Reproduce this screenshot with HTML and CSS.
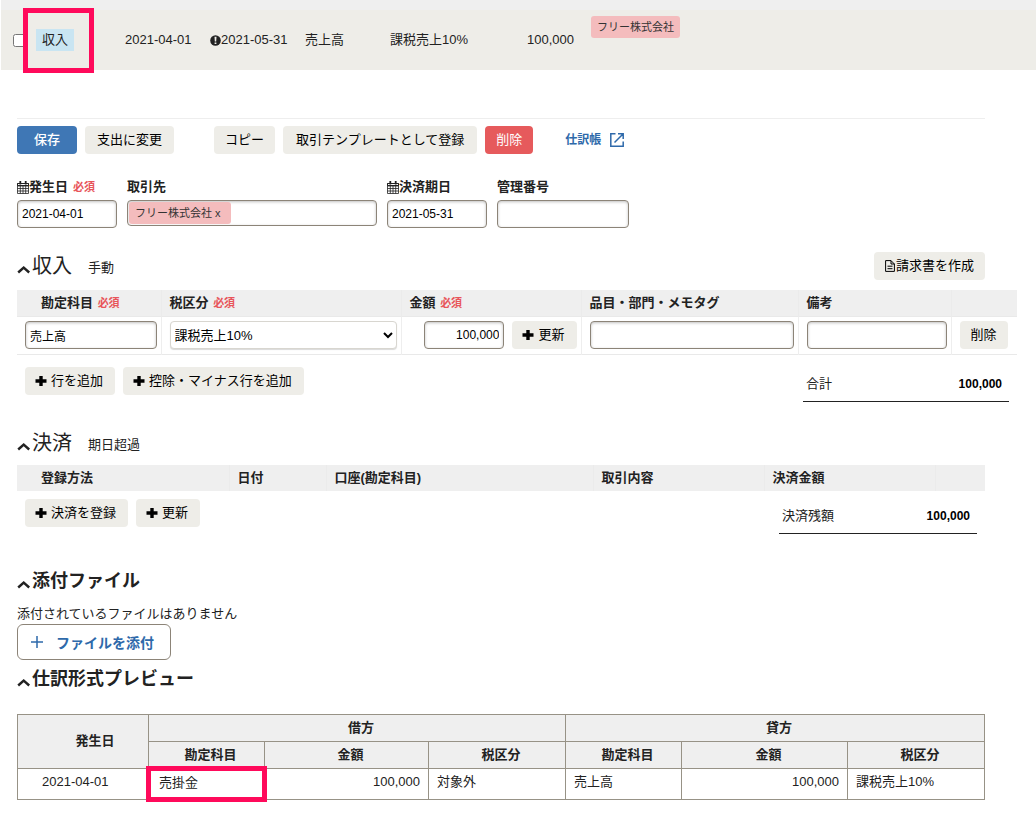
FILE: index.html
```html
<!DOCTYPE html>
<html lang="ja">
<head>
<meta charset="utf-8">
<title>取引の詳細</title>
<link rel="stylesheet" href="styles.css">
</head>
<body>
<svg class="sprite" aria-hidden="true">
  <symbol id="chevron" viewBox="0 0 14 9"><path d="M1.200 7.500 6.700 2.500l5.500 5" fill="none" stroke="currentColor" stroke-width="2.400"/></symbol>
  <symbol id="plus" viewBox="0 0 12 12"><path d="M4.300 1h3.400v3.300H11.500v3.400H7.700V11H4.300V7.700H.5V4.300h3.800z" fill="currentColor"/></symbol>
  <symbol id="calendar" viewBox="0 0 12 13"><path d="M.5 2.500h11v10H.5z M.5 5h11 M.5 7.500h11 M.5 10h11 M3.300 5v7.500 M6 5v7.500 M8.700 5v7.500" fill="none" stroke="currentColor" stroke-width=".8"/><path d="M.5 2.500h11v2H.5z" fill="none" stroke="currentColor"/><path d="M3.300 0v3.500M8.700 0v3.500" stroke="currentColor" stroke-width="1.800"/></symbol>
</svg>

<header class="summary">
  <input type="checkbox" class="summary-check" aria-label="取引を選択">
  <span class="summary-type"><span class="type-tag">収入</span></span>
  <span class="summary-date">2021-04-01</span>
  <span class="summary-due"><svg class="icon-alert" viewBox="0 0 11 11"><circle cx="5.500" cy="5.500" r="5.300" fill="currentColor"/><path d="M4.500 1.800h2l-.3 4.600H4.800zM4.600 7.400h1.800v1.700H4.600z" fill="#eeede8"/></svg>2021-05-31</span>
  <span class="summary-account">売上高</span>
  <span class="summary-tax">課税売上10%</span>
  <span class="summary-amount">100,000</span>
  <span class="tag summary-partner">フリー株式会社</span>
</header>

<main class="detail">
  <div class="toolbar">
    <button class="btn btn-primary">保存</button>
    <button class="btn btn-switch">支出に変更</button>
    <button class="btn btn-copy">コピー</button>
    <button class="btn btn-template">取引テンプレートとして登録</button>
    <button class="btn btn-danger">削除</button>
    <a class="journal-link" href="#journal">仕訳帳
      <svg class="icon-external" viewBox="0 0 14 14" fill="none" stroke="currentColor" stroke-width="1.500"><path d="M5.500.8H.8v12.400h12.400V8.500M8 .8h5.200V6M13 1 4.500 9.500"/></svg></a>
  </div>

  <div class="fields">
    <div class="field field-date">
      <label for="issue"><svg class="icon-cal"><use href="#calendar"/></svg>発生日 <span class="required">必須</span></label>
      <input id="issue" class="input" type="text" value="2021-04-01">
    </div>
    <div class="field field-partner">
      <label for="partner">取引先</label>
      <div class="tag-box"><span class="tag">フリー株式会社 x</span><input id="partner" type="text"></div>
    </div>
    <div class="field field-date">
      <label for="due"><svg class="icon-cal"><use href="#calendar"/></svg>決済期日</label>
      <input id="due" class="input" type="text" value="2021-05-31">
    </div>
    <div class="field field-number">
      <label for="number">管理番号</label>
      <input id="number" class="input" type="text">
    </div>
  </div>

  <section class="income">
    <div class="section-head">
      <h2 class="title"><svg class="icon-chevron"><use href="#chevron"/></svg>収入</h2>
      <span class="note">手動</span>
      <button class="btn btn-invoice"><svg class="icon-file" viewBox="0 0 10 12" fill="none" stroke="currentColor"><path d="M.6.600h5.400L9.400 4v7.400H.6zM6 .6V4h3.400M2.500 6.200h5M2.500 8.700h5"/></svg>請求書を作成</button>
    </div>
    <table class="grid lines">
      <colgroup><col class="w-account"><col class="w-tax"><col class="w-amount"><col><col class="w-memo"><col class="w-action"></colgroup>
      <thead>
        <tr><th>勘定科目 <span class="required">必須</span></th><th>税区分 <span class="required">必須</span></th><th>金額 <span class="required">必須</span></th><th>品目・部門・メモタグ</th><th>備考</th><th></th></tr>
      </thead>
      <tbody>
        <tr>
          <td><input class="input" type="text" value="売上高" aria-label="勘定科目"></td>
          <td><select class="select" aria-label="税区分"><option>課税売上10%</option></select></td>
          <td><div class="amount-cell"><input class="input amount" type="text" value="100,000" aria-label="金額"><button class="btn"><svg class="icon-plus"><use href="#plus"/></svg>更新</button></div></td>
          <td><input class="input" type="text" aria-label="品目・部門・メモタグ"></td>
          <td><input class="input" type="text" aria-label="備考"></td>
          <td><button class="btn">削除</button></td>
        </tr>
      </tbody>
    </table>
    <div class="section-foot">
      <button class="btn"><svg class="icon-plus"><use href="#plus"/></svg>行を追加</button>
      <button class="btn"><svg class="icon-plus"><use href="#plus"/></svg>控除・マイナス行を追加</button>
      <div class="total"><span>合計</span><strong>100,000</strong></div>
    </div>
  </section>

  <section class="payment">
    <div class="section-head">
      <h2 class="title"><svg class="icon-chevron"><use href="#chevron"/></svg>決済</h2>
      <span class="note">期日超過</span>
    </div>
    <table class="grid">
      <colgroup><col class="w-method"><col class="w-day"><col><col class="w-content"><col class="w-paid"><col class="w-end"></colgroup>
      <thead>
        <tr><th>登録方法</th><th>日付</th><th>口座(勘定科目)</th><th>取引内容</th><th>決済金額</th><th></th></tr>
      </thead>
    </table>
    <div class="section-foot">
      <button class="btn"><svg class="icon-plus"><use href="#plus"/></svg>決済を登録</button>
      <button class="btn"><svg class="icon-plus"><use href="#plus"/></svg>更新</button>
      <div class="total"><span>決済残額</span><strong>100,000</strong></div>
    </div>
  </section>

  <section class="files">
    <h2 class="title title-strong"><svg class="icon-chevron"><use href="#chevron"/></svg>添付ファイル</h2>
    <p class="empty">添付されているファイルはありません</p>
    <button class="attach"><svg class="icon-add" viewBox="0 0 14 14"><path d="M7 1v12M1 7h12" stroke="currentColor" stroke-width="1.500"/></svg>ファイルを添付</button>
  </section>

  <section class="preview" id="journal">
    <h2 class="title title-strong"><svg class="icon-chevron"><use href="#chevron"/></svg>仕訳形式プレビュー</h2>
    <table class="journal">
      <colgroup><col class="j-date"><col class="j-account"><col class="j-amount"><col class="j-tax"><col class="j-account"><col><col class="j-tax"></colgroup>
      <thead>
        <tr><th rowspan="2" class="date-head">発生日</th><th colspan="3">借方</th><th colspan="3">貸方</th></tr>
        <tr><th>勘定科目</th><th>金額</th><th>税区分</th><th>勘定科目</th><th>金額</th><th>税区分</th></tr>
      </thead>
      <tbody>
        <tr><td class="date-cell">2021-04-01</td><td class="marked">売掛金</td><td class="num">100,000</td><td>対象外</td><td>売上高</td><td class="num">100,000</td><td>課税売上10%</td></tr>
      </tbody>
    </table>
  </section>
</main>
</body>
</html>
```
FILE: styles.css
```css
*, ::before, ::after { box-sizing: border-box; }

body {
  margin: 0;
  background: #fff;
  color: #222;
  font: 13px/20px "Liberation Sans", "Noto Sans CJK JP", sans-serif;
}

button, input, select { font-family: inherit; color: #000; }
.sprite { display: none; }
svg { flex: none; }

/* selected transaction row */
.summary {
  display: grid;
  grid-template-columns: 23px 89px 85px 95px 85px 100px 101px 1fr;
  align-items: center;
  height: 70px;
  margin-left: 1px;
  padding: 10px 0 0 12px;
  background: linear-gradient(#efefef 10px, #eeede8 10px);
}
.summary-check { width: 13px; height: 13px; margin: 0; }
.summary-type { position: relative; }
.summary-type::after {
  content: "";
  position: absolute;
  left: -13px;
  top: -21px;
  width: 71px;
  height: 65px;
  border: 5px solid #ff0a5b;
}
.type-tag {
  display: inline-block;
  height: 22px;
  padding: 0 6px;
  line-height: 22px;
  background: #c9e5f2;
}
.summary-due { display: flex; align-items: center; }
.icon-alert { width: 11px; height: 11px; }
.summary-amount { padding-right: 17px; text-align: right; }
.tag {
  padding: 0 7px;
  border-radius: 3px;
  background: #f4bcbd;
  color: #333;
  font-size: 11px;
  line-height: 22px;
  white-space: nowrap;
}
.summary-partner { place-self: start; margin-top: 6px; padding: 0 6px; }

.detail { padding: 48px 51px 19px 17px; }

.btn {
  display: inline-flex;
  align-items: center;
  justify-content: center;
  flex: none;
  height: 28px;
  padding: 0 11px;
  border: 0;
  border-radius: 4px;
  background: #eeede8;
  font-size: 13px;
  line-height: 20px;
  white-space: nowrap;
}
.btn-primary { padding: 0 17px; background: #3f77b5; color: #fff; font-weight: 500; }
.btn-danger { background: #e65a5c; color: #fff; }
.btn-switch { padding: 0 12px; }
.btn-template { padding: 0 13px; }
.btn-copy { margin-left: 32px; }
.icon-plus { width: 12px; height: 12px; margin: 0 4px 0 -1px; }
.btn:has(.icon-plus) { padding-right: 12px; }
.icon-file { width: 10px; height: 12px; margin-right: 1px; }

.toolbar {
  display: flex;
  align-items: center;
  gap: 8px;
  padding-top: 7px;
  border-top: 1px solid #eee;
}
.journal-link {
  display: flex;
  align-items: center;
  gap: 9px;
  margin-left: 24px;
  color: #2e69aa;
  font-size: 12px;
  font-weight: 700;
  text-decoration: none;
}
.icon-external { width: 14px; height: 14px; }

.fields { display: flex; align-items: flex-start; gap: 10px; margin-top: 23px; }
.field { display: flex; flex-direction: column; gap: 3px; }
.field label { display: flex; align-items: center; font-weight: 700; white-space: nowrap; }
.field-date { width: 100px; }
.field-partner { width: 250px; }
.field-number { width: 132px; }
.icon-cal { width: 12px; height: 13px; }
.required { margin-left: 1px; color: #e8555a; font-size: 11px; font-weight: 700; }
.field .required { margin-left: 5px; }

.input, .tag-box {
  width: 100%;
  border: 1px solid #8c8478;
  border-radius: 4px;
  background: #fff;
  box-shadow: inset 0 1px 3px rgba(0, 0, 0, .25);
}
.input { display: block; height: 28px; padding: 0 4px; font-size: 12px; }
.tag-box { display: flex; height: 26px; padding: 1px; }
.tag-box .tag { padding: 0 10px 0 6px; }
.tag-box input { flex: 1; min-width: 0; border: 0; background: transparent; }

.section-head { display: flex; align-items: center; height: 28px; }
.title {
  display: flex;
  align-items: center;
  height: 28px;
  margin: 0;
  font-size: 20px;
  font-weight: 400;
  line-height: 28px;
}
.title-strong { font-size: 18px; font-weight: 700; }
.icon-chevron { width: 14px; height: 9px; margin: 7px 1px 0 0; }
.note { margin: 4px 0 0 16px; }
.btn-invoice { margin-left: auto; }

.grid { width: 100%; border-collapse: collapse; table-layout: fixed; }
.grid th {
  height: 26px;
  padding: 0 8px;
  border-right: 1px solid #ebebeb;
  background: #efefef;
  text-align: left;
}
.grid th:first-child { padding-left: 24px; }
.grid th:last-child, .grid td:last-child { border-right: 0; }
.grid td { height: 38px; padding: 0 4px 0 8px; border-right: 1px solid #eee; }
.lines { width: calc(100% + 32px); }
.lines tr { border-bottom: 1px solid #e9e9e9; }
.w-account { width: 144px; }
.w-tax { width: 240px; }
.w-amount { width: 180px; }
.w-memo { width: 153px; }
.w-action { width: 66px; }
.w-method { width: 212px; }
.w-day { width: 97px; }
.w-content { width: 171px; }
.w-paid { width: 171px; }
.w-end { width: 50px; }

.select {
  display: block;
  width: 100%;
  height: 28px;
  padding: 0;
  border: 1px solid #d8d6d0;
  border-radius: 4px;
  background: #fff;
  box-shadow: 0 1px 1px rgba(0, 0, 0, .15);
  font-size: 13px;
}
.amount-cell { display: flex; justify-content: flex-end; gap: 8px; }
.amount { width: 80px; text-align: right; }

.section-foot { display: flex; align-items: flex-start; gap: 8px; padding-left: 8px; }
.total {
  display: flex;
  justify-content: space-between;
  width: 198px;
  margin: 7px 8px 0 auto;
  padding: 0 7px 7px 3px;
  border-bottom: 1px solid #222;
}
.total strong { color: #000; font-size: 12px; }

.income { margin-top: 24px; }
.income .grid { margin-top: 10px; }
.income .section-foot { width: calc(100% + 32px); margin-top: 12px; }
.income .total { width: 206px; }
.payment { margin-top: 27px; }
.payment .grid, .payment .section-foot { margin-top: 8px; }
.files { margin-top: 33px; }
.empty { margin: 9px 0 0; }
.attach {
  display: flex;
  align-items: center;
  gap: 12px;
  height: 36px;
  padding: 0 16px 0 12px;
  border: 1px solid #8c8478;
  border-radius: 6px;
  background: #fff;
  color: #2e69aa;
  font-size: 14px;
  font-weight: 700;
}
.icon-add { width: 14px; height: 14px; }

.preview { margin-top: 5px; }
.journal { width: 100%; margin-top: 21px; border-collapse: collapse; table-layout: fixed; }
.journal th, .journal td { border: 1px solid #979286; }
.journal th { height: 27px; padding: 0 0 0 8px; background: #efefef; }
.journal td { height: 31px; padding: 3px 8px; vertical-align: top; }
.journal th.date-head { padding-left: 24px; }
.journal td.date-cell { padding-left: 24px; }
.journal .num { text-align: right; }
.j-date { width: 131px; }
.j-account { width: 116px; }
.j-amount { width: 164px; }
.j-tax { width: 137px; }
.journal td.marked { position: relative; padding-top: 4px; padding-left: 10px; }
.marked::after {
  content: "";
  position: absolute;
  inset: -3px;
  border: 5px solid #ff0a5b;
}
```
